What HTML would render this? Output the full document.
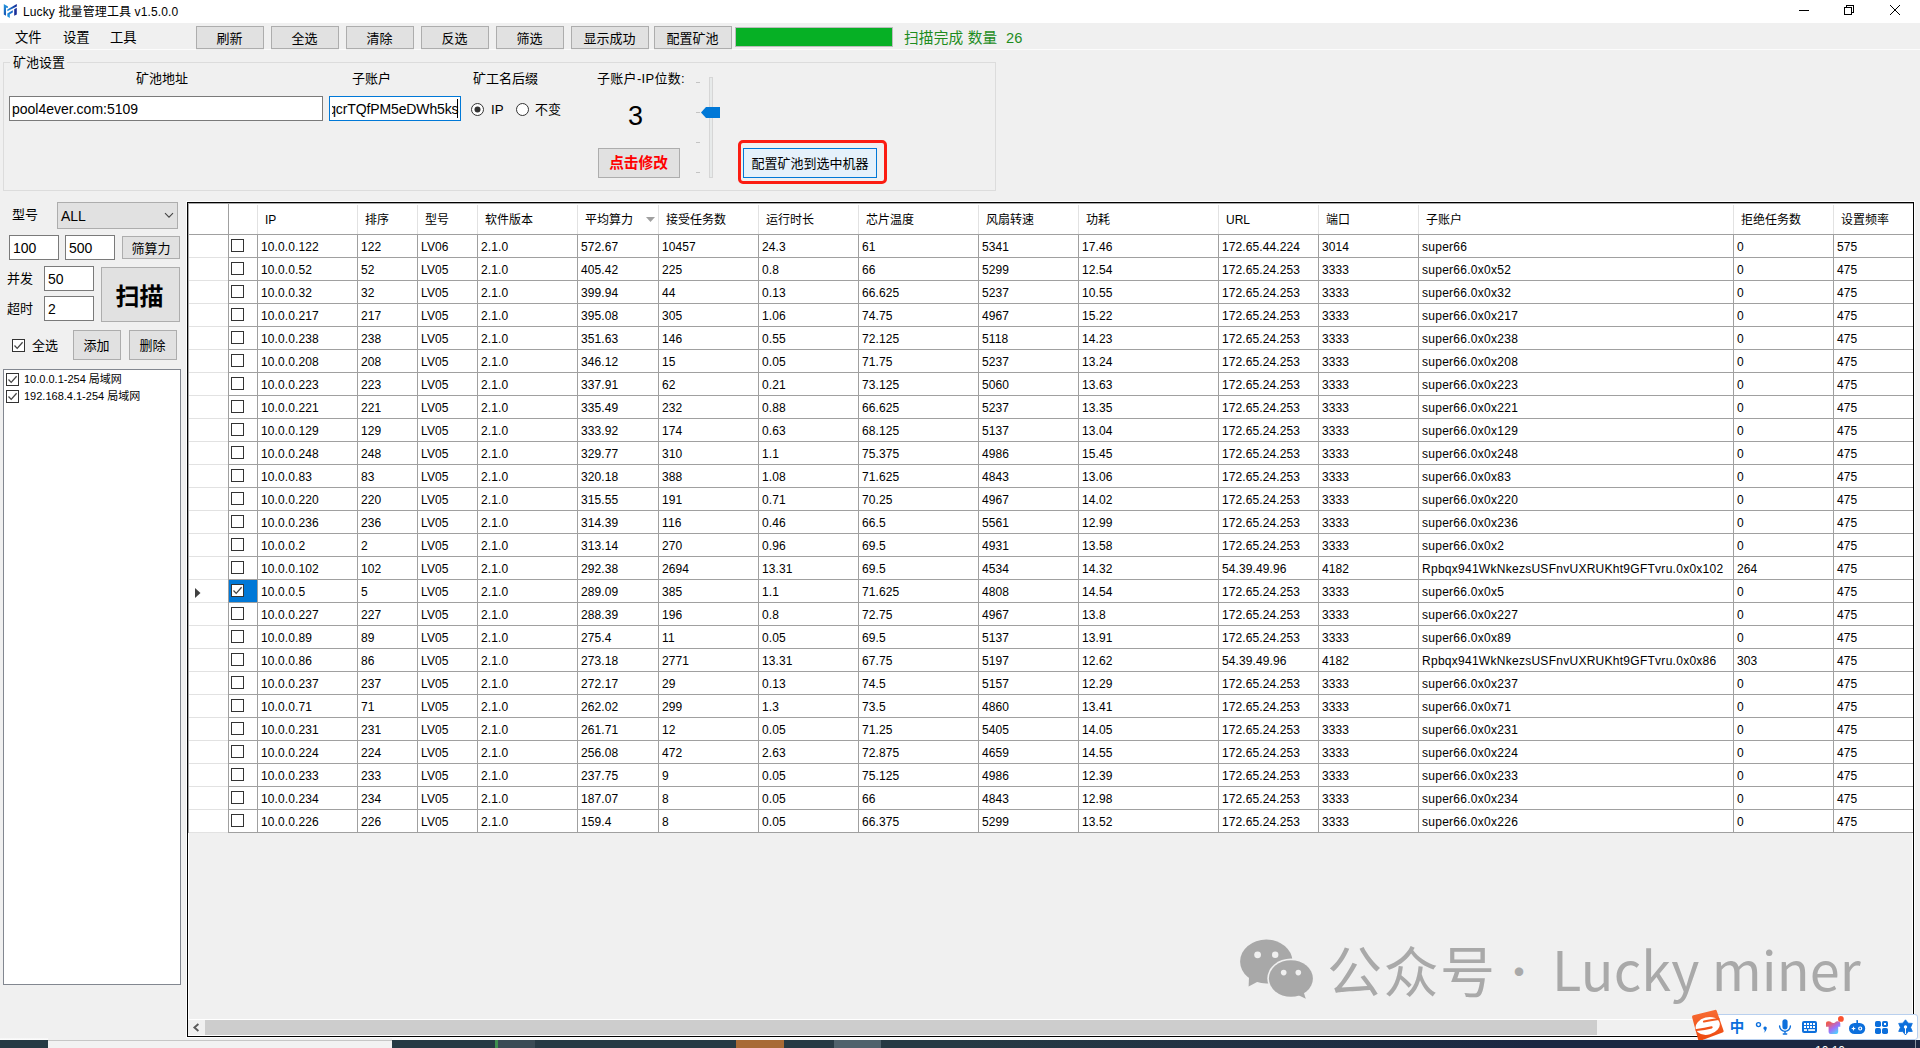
<!DOCTYPE html>
<html lang="zh-CN"><head><meta charset="utf-8"><title>Lucky 批量管理工具 v1.5.0.0</title>
<style>
html,body{margin:0;padding:0}
body{width:1920px;height:1048px;overflow:hidden;background:#f0f0f0;position:relative;
 font-family:"Liberation Sans","Noto Sans CJK SC",sans-serif;font-size:13px;color:#000;}
.a{position:absolute;white-space:nowrap;box-sizing:border-box}
.btn{position:absolute;box-sizing:border-box;background:#e1e1e1;border:1px solid #adadad;text-align:center;white-space:nowrap}
.tb{position:absolute;box-sizing:border-box;background:#fff;border:1px solid #7a7a7a;white-space:nowrap;overflow:hidden}
.lbl{position:absolute;white-space:nowrap;line-height:16px;height:16px}
.cb{position:absolute;box-sizing:border-box;width:13px;height:13px;border:1px solid #333;background:#fff}
.g{position:absolute;white-space:nowrap;font-size:12px;line-height:22px;height:22px;letter-spacing:0.1px}
.gh{position:absolute;white-space:nowrap;font-size:12px;line-height:31px;height:31px}
.vl{position:absolute;width:1px;background:#a0a0a0}
.hl{position:absolute;height:1px;background:#a0a0a0}
</style></head><body>

<div class="a" style="left:0;top:0;width:1920px;height:23px;background:#fff"></div>
<svg class="a" style="left:0;top:0" width="22" height="22" viewBox="0 0 22 22">
<defs>
<linearGradient id="i1" x1="0" y1="0" x2="0" y2="1"><stop offset="0" stop-color="#2498e0"/><stop offset="1" stop-color="#1650b0"/></linearGradient>
<linearGradient id="i2" x1="0" y1="1" x2="1" y2="0"><stop offset="0" stop-color="#2498e4"/><stop offset="1" stop-color="#101c8c"/></linearGradient>
<linearGradient id="i3" x1="0" y1="1" x2="1" y2="0"><stop offset="0" stop-color="#28a4ea"/><stop offset="1" stop-color="#1458bc"/></linearGradient>
</defs>
<path d="M3.8 4 L8 6.4 V7.7 H6 V15.8 L3.8 14.6 Z" fill="url(#i1)"/>
<path d="M7.3 9.4 L16.8 4.1 V6.4 L7.3 11.3 Z" fill="url(#i2)"/>
<path d="M7.3 13.5 L12.8 10.3 V12.6 L9.8 14.3 V17.9 L7.3 16.5 Z" fill="url(#i3)"/>
<path d="M14.2 9.2 L16.8 7.8 V14.4 L14.2 15.8 Z" fill="#1a2f9a"/>
</svg>
<div class="a" style="left:23px;top:4px;font-size:12px;line-height:17px;letter-spacing:0.12px">Lucky 批量管理工具 v1.5.0.0</div>
<svg class="a" style="left:1790px;top:0" width="130" height="23" viewBox="0 0 130 23" shape-rendering="crispEdges">
<rect x="9" y="10" width="10" height="1" fill="#000"/>
<rect x="54.5" y="7.5" width="7" height="7" fill="none" stroke="#000" stroke-width="1"/>
<path d="M56.5 7.5 V5.5 H63.5 V12.5 H61.5" fill="none" stroke="#000" stroke-width="1"/>
<path d="M100 5 L110 15 M110 5 L100 15" stroke="#000" stroke-width="1" shape-rendering="geometricPrecision"/>
</svg>
<div class="lbl" style="left:15px;top:30px;font-size:13.33px">文件</div>
<div class="lbl" style="left:63px;top:30px;font-size:13.33px">设置</div>
<div class="lbl" style="left:110px;top:30px;font-size:13.33px">工具</div>
<div class="a" style="left:0;top:49px;width:1920px;height:1px;background:#fcfcfc"></div>
<div class="btn" style="left:196px;top:26px;width:68px;height:23px;line-height:24px;box-shadow:0 1px 0 #f0f0f0;text-indent:-1px">刷新</div>
<div class="btn" style="left:271px;top:26px;width:68px;height:23px;line-height:24px;box-shadow:0 1px 0 #f0f0f0;text-indent:-1px">全选</div>
<div class="btn" style="left:346px;top:26px;width:68px;height:23px;line-height:24px;box-shadow:0 1px 0 #f0f0f0;text-indent:-1px">清除</div>
<div class="btn" style="left:421px;top:26px;width:68px;height:23px;line-height:24px;box-shadow:0 1px 0 #f0f0f0;text-indent:-1px">反选</div>
<div class="btn" style="left:496px;top:26px;width:68px;height:23px;line-height:24px;box-shadow:0 1px 0 #f0f0f0;text-indent:-1px">筛选</div>
<div class="btn" style="left:571px;top:26px;width:78px;height:23px;line-height:24px;box-shadow:0 1px 0 #f0f0f0;text-indent:-1px">显示成功</div>
<div class="btn" style="left:654px;top:26px;width:78px;height:23px;line-height:24px;box-shadow:0 1px 0 #f0f0f0;text-indent:-1px">配置矿池</div>
<div class="a" style="left:735px;top:27px;width:158px;height:20px;background:#06b025;border:1px solid #bcbcbc"></div>
<div class="lbl" style="left:904px;top:29px;font-size:14.67px;line-height:18px;height:18px;color:#1e8c1e;letter-spacing:0.2px">扫描完成 数量&nbsp; 26</div>
<div class="a" style="left:3px;top:62px;width:993px;height:129px;border:1px solid #dcdcdc"></div>
<div class="lbl" style="left:10px;top:55px;width:57px;background:#f0f0f0;padding-left:3px;box-sizing:border-box">矿池设置</div>
<div class="lbl" style="left:136px;top:71px">矿池地址</div>
<div class="lbl" style="left:352px;top:71px">子账户</div>
<div class="lbl" style="left:473px;top:71px">矿工名后缀</div>
<div class="lbl" style="left:597px;top:71px;letter-spacing:0.3px">子账户-IP位数:</div>
<div class="tb" style="left:9px;top:96px;width:314px;height:25px;line-height:25px;padding-left:2px;font-size:14px">pool4ever.com:5109</div>
<div class="tb" style="left:329px;top:96px;width:132px;height:25px;border-color:#0078d7"><div class="a" style="left:2px;right:0;top:0;bottom:0;overflow:hidden"><div class="a" style="right:1.5px;top:0;line-height:25px;font-size:14px;letter-spacing:-0.12px">qcrTQfPM5eDWh5ks</div></div><div class="a" style="left:127px;top:2px;width:1px;height:19px;background:#000"></div></div>
<svg class="a" style="left:471px;top:103px" width="13" height="13" viewBox="0 0 13 13"><circle cx="6.5" cy="6.5" r="6" fill="#fff" stroke="#333" stroke-width="1"/><circle cx="6.5" cy="6.5" r="3" fill="#333"/></svg>
<div class="lbl" style="left:491px;top:102px;font-size:13.33px">IP</div>
<svg class="a" style="left:516px;top:103px" width="13" height="13" viewBox="0 0 13 13"><circle cx="6.5" cy="6.5" r="6" fill="#fff" stroke="#333" stroke-width="1"/></svg>
<div class="lbl" style="left:535px;top:102px">不变</div>
<div class="a" style="left:628px;top:101px;font-size:27px;line-height:30px">3</div>
<div class="btn" style="left:598px;top:148px;width:82px;height:30px;line-height:29px;color:#f00;font-weight:bold;font-size:14.67px;text-indent:-1px">点击修改</div>
<div class="a" style="left:709px;top:77px;width:4px;height:101px;background:#e7eaea;border:1px solid #d6d6d6"></div>
<div class="a" style="left:696px;top:82px;width:4px;height:1px;background:#c4c4c4"></div>
<div class="a" style="left:696px;top:112px;width:4px;height:1px;background:#c4c4c4"></div>
<div class="a" style="left:696px;top:142px;width:4px;height:1px;background:#c4c4c4"></div>
<div class="a" style="left:696px;top:172px;width:4px;height:1px;background:#c4c4c4"></div>
<svg class="a" style="left:700px;top:107px" width="20" height="11" viewBox="0 0 20 11"><path d="M1 5.5 L6 0 H20 V11 H6 Z" fill="#0078d7"/></svg>
<div class="a" style="left:738px;top:140px;width:149px;height:44px;border:3px solid #fb1c12;border-radius:5px"></div>
<div class="btn" style="left:743px;top:148px;width:134px;height:30px;line-height:29px;background:#e5f1fb;border-color:#0078d7">配置矿池到选中机器</div>
<div class="lbl" style="left:12px;top:207px">型号</div>
<div class="btn" style="left:57px;top:202px;width:121px;height:27px;line-height:26px;text-align:left;padding-left:3px;font-size:14px">ALL</div>
<svg class="a" style="left:164px;top:212px" width="10" height="7" viewBox="0 0 10 7"><path d="M1 1.2 L5 5.2 L9 1.2" fill="none" stroke="#444" stroke-width="1.1"/></svg>
<div class="tb" style="left:9px;top:235px;width:50px;height:25px;line-height:24px;padding-left:3px;font-size:14px">100</div>
<div class="tb" style="left:65px;top:235px;width:50px;height:25px;line-height:24px;padding-left:3px;font-size:14px">500</div>
<div class="btn" style="left:122px;top:236px;width:58px;height:23px;line-height:23px">筛算力</div>
<div class="lbl" style="left:7px;top:271px">并发</div>
<div class="tb" style="left:44px;top:266px;width:50px;height:25px;line-height:24px;padding-left:3px;font-size:14px">50</div>
<div class="lbl" style="left:7px;top:301px">超时</div>
<div class="tb" style="left:44px;top:296px;width:50px;height:25px;line-height:24px;padding-left:3px;font-size:14px">2</div>
<div class="btn" style="left:101px;top:267px;width:79px;height:55px;line-height:57px;font-size:24px;font-weight:bold;text-indent:-2px">扫描</div>
<div class="cb" style="left:12px;top:339px"><svg width="11" height="11" viewBox="0 0 11 11" style="display:block"><path d="M1.5 5.5 L4.2 8.4 L9.6 2.2" fill="none" stroke="#444" stroke-width="1.3"/></svg></div>
<div class="lbl" style="left:32px;top:338px">全选</div>
<div class="btn" style="left:73px;top:330px;width:48px;height:30px;line-height:29px;text-indent:-1px">添加</div>
<div class="btn" style="left:129px;top:330px;width:48px;height:30px;line-height:29px;text-indent:-1px">删除</div>
<div class="a" style="left:3px;top:369px;width:178px;height:616px;background:#fff;border:1px solid #828790"></div>
<div class="cb" style="left:6px;top:373px"><svg width="11" height="11" viewBox="0 0 11 11" style="display:block"><path d="M1.5 5.5 L4.2 8.4 L9.6 2.2" fill="none" stroke="#444" stroke-width="1.3"/></svg></div>
<div class="lbl" style="left:24px;top:372px;font-size:11px;line-height:15px;height:15px">10.0.0.1-254 局域网</div>
<div class="cb" style="left:6px;top:390px"><svg width="11" height="11" viewBox="0 0 11 11" style="display:block"><path d="M1.5 5.5 L4.2 8.4 L9.6 2.2" fill="none" stroke="#444" stroke-width="1.3"/></svg></div>
<div class="lbl" style="left:24px;top:389px;font-size:11px;line-height:15px;height:15px">192.168.4.1-254 局域网</div>
<div class="a" style="left:186px;top:201px;width:1729px;height:837px;border:1px solid #fdfdfd"></div>
<div class="a" style="left:187px;top:202px;width:1727px;height:835px;border:1px solid #000;background:#f0f0f0;box-shadow:inset 1px 1px 0 #fff, inset -1px -1px 0 #fff"></div>
<div class="a" style="left:188px;top:203px;width:1725px;height:630px;background:#fff"></div>
<div class="hl" style="left:188px;top:203px;width:1725px;background:#a8a8a8"></div>
<div class="vl" style="left:188px;top:203px;height:630px;background:#a8a8a8"></div>
<div class="a" style="left:229px;top:580px;width:28px;height:22px;background:#0078d7"></div>
<div class="vl" style="left:228px;top:204px;height:30px"></div>
<div class="vl" style="left:228px;top:234px;height:599px"></div>
<div class="vl" style="left:257px;top:205px;height:29px;background:#e2e2e2"></div>
<div class="vl" style="left:257px;top:234px;height:599px"></div>
<div class="vl" style="left:357px;top:205px;height:29px;background:#e2e2e2"></div>
<div class="vl" style="left:357px;top:234px;height:599px"></div>
<div class="vl" style="left:417px;top:205px;height:29px;background:#e2e2e2"></div>
<div class="vl" style="left:417px;top:234px;height:599px"></div>
<div class="vl" style="left:477px;top:205px;height:29px;background:#e2e2e2"></div>
<div class="vl" style="left:477px;top:234px;height:599px"></div>
<div class="vl" style="left:577px;top:205px;height:29px;background:#e2e2e2"></div>
<div class="vl" style="left:577px;top:234px;height:599px"></div>
<div class="vl" style="left:658px;top:205px;height:29px;background:#e2e2e2"></div>
<div class="vl" style="left:658px;top:234px;height:599px"></div>
<div class="vl" style="left:758px;top:205px;height:29px;background:#e2e2e2"></div>
<div class="vl" style="left:758px;top:234px;height:599px"></div>
<div class="vl" style="left:858px;top:205px;height:29px;background:#e2e2e2"></div>
<div class="vl" style="left:858px;top:234px;height:599px"></div>
<div class="vl" style="left:978px;top:205px;height:29px;background:#e2e2e2"></div>
<div class="vl" style="left:978px;top:234px;height:599px"></div>
<div class="vl" style="left:1078px;top:205px;height:29px;background:#e2e2e2"></div>
<div class="vl" style="left:1078px;top:234px;height:599px"></div>
<div class="vl" style="left:1218px;top:205px;height:29px;background:#e2e2e2"></div>
<div class="vl" style="left:1218px;top:234px;height:599px"></div>
<div class="vl" style="left:1318px;top:205px;height:29px;background:#e2e2e2"></div>
<div class="vl" style="left:1318px;top:234px;height:599px"></div>
<div class="vl" style="left:1418px;top:205px;height:29px;background:#e2e2e2"></div>
<div class="vl" style="left:1418px;top:234px;height:599px"></div>
<div class="vl" style="left:1733px;top:205px;height:29px;background:#e2e2e2"></div>
<div class="vl" style="left:1733px;top:234px;height:599px"></div>
<div class="vl" style="left:1833px;top:205px;height:29px;background:#e2e2e2"></div>
<div class="vl" style="left:1833px;top:234px;height:599px"></div>
<div class="hl" style="left:189px;top:234px;width:1724px"></div>
<div class="hl" style="left:189px;top:257px;width:39px;background:#e2e2e2"></div>
<div class="hl" style="left:228px;top:257px;width:1685px"></div>
<div class="hl" style="left:189px;top:280px;width:39px;background:#e2e2e2"></div>
<div class="hl" style="left:228px;top:280px;width:1685px"></div>
<div class="hl" style="left:189px;top:303px;width:39px;background:#e2e2e2"></div>
<div class="hl" style="left:228px;top:303px;width:1685px"></div>
<div class="hl" style="left:189px;top:326px;width:39px;background:#e2e2e2"></div>
<div class="hl" style="left:228px;top:326px;width:1685px"></div>
<div class="hl" style="left:189px;top:349px;width:39px;background:#e2e2e2"></div>
<div class="hl" style="left:228px;top:349px;width:1685px"></div>
<div class="hl" style="left:189px;top:372px;width:39px;background:#e2e2e2"></div>
<div class="hl" style="left:228px;top:372px;width:1685px"></div>
<div class="hl" style="left:189px;top:395px;width:39px;background:#e2e2e2"></div>
<div class="hl" style="left:228px;top:395px;width:1685px"></div>
<div class="hl" style="left:189px;top:418px;width:39px;background:#e2e2e2"></div>
<div class="hl" style="left:228px;top:418px;width:1685px"></div>
<div class="hl" style="left:189px;top:441px;width:39px;background:#e2e2e2"></div>
<div class="hl" style="left:228px;top:441px;width:1685px"></div>
<div class="hl" style="left:189px;top:464px;width:39px;background:#e2e2e2"></div>
<div class="hl" style="left:228px;top:464px;width:1685px"></div>
<div class="hl" style="left:189px;top:487px;width:39px;background:#e2e2e2"></div>
<div class="hl" style="left:228px;top:487px;width:1685px"></div>
<div class="hl" style="left:189px;top:510px;width:39px;background:#e2e2e2"></div>
<div class="hl" style="left:228px;top:510px;width:1685px"></div>
<div class="hl" style="left:189px;top:533px;width:39px;background:#e2e2e2"></div>
<div class="hl" style="left:228px;top:533px;width:1685px"></div>
<div class="hl" style="left:189px;top:556px;width:39px;background:#e2e2e2"></div>
<div class="hl" style="left:228px;top:556px;width:1685px"></div>
<div class="hl" style="left:189px;top:579px;width:39px;background:#e2e2e2"></div>
<div class="hl" style="left:228px;top:579px;width:1685px"></div>
<div class="hl" style="left:189px;top:602px;width:39px;background:#e2e2e2"></div>
<div class="hl" style="left:228px;top:602px;width:1685px"></div>
<div class="hl" style="left:189px;top:625px;width:39px;background:#e2e2e2"></div>
<div class="hl" style="left:228px;top:625px;width:1685px"></div>
<div class="hl" style="left:189px;top:648px;width:39px;background:#e2e2e2"></div>
<div class="hl" style="left:228px;top:648px;width:1685px"></div>
<div class="hl" style="left:189px;top:671px;width:39px;background:#e2e2e2"></div>
<div class="hl" style="left:228px;top:671px;width:1685px"></div>
<div class="hl" style="left:189px;top:694px;width:39px;background:#e2e2e2"></div>
<div class="hl" style="left:228px;top:694px;width:1685px"></div>
<div class="hl" style="left:189px;top:717px;width:39px;background:#e2e2e2"></div>
<div class="hl" style="left:228px;top:717px;width:1685px"></div>
<div class="hl" style="left:189px;top:740px;width:39px;background:#e2e2e2"></div>
<div class="hl" style="left:228px;top:740px;width:1685px"></div>
<div class="hl" style="left:189px;top:763px;width:39px;background:#e2e2e2"></div>
<div class="hl" style="left:228px;top:763px;width:1685px"></div>
<div class="hl" style="left:189px;top:786px;width:39px;background:#e2e2e2"></div>
<div class="hl" style="left:228px;top:786px;width:1685px"></div>
<div class="hl" style="left:189px;top:809px;width:39px;background:#e2e2e2"></div>
<div class="hl" style="left:228px;top:809px;width:1685px"></div>
<div class="hl" style="left:189px;top:832px;width:39px;background:#e2e2e2"></div>
<div class="hl" style="left:228px;top:832px;width:1685px"></div>
<div class="gh" style="left:265px;top:205px">IP</div>
<div class="gh" style="left:365px;top:205px">排序</div>
<div class="gh" style="left:425px;top:205px">型号</div>
<div class="gh" style="left:485px;top:205px">软件版本</div>
<div class="gh" style="left:585px;top:205px">平均算力</div>
<div class="gh" style="left:666px;top:205px">接受任务数</div>
<div class="gh" style="left:766px;top:205px">运行时长</div>
<div class="gh" style="left:866px;top:205px">芯片温度</div>
<div class="gh" style="left:986px;top:205px">风扇转速</div>
<div class="gh" style="left:1086px;top:205px">功耗</div>
<div class="gh" style="left:1226px;top:205px">URL</div>
<div class="gh" style="left:1326px;top:205px">端口</div>
<div class="gh" style="left:1426px;top:205px">子账户</div>
<div class="gh" style="left:1741px;top:205px">拒绝任务数</div>
<div class="gh" style="left:1841px;top:205px">设置频率</div>
<svg class="a" style="left:646px;top:217px" width="9" height="5" viewBox="0 0 9 5"><path d="M0 0 H9 L4.5 5 Z" fill="#a0a0a0"/></svg>
<div class="cb" style="left:231px;top:239px"></div>
<div class="g" style="left:261px;top:236px">10.0.0.122</div>
<div class="g" style="left:361px;top:236px">122</div>
<div class="g" style="left:421px;top:236px">LV06</div>
<div class="g" style="left:481px;top:236px">2.1.0</div>
<div class="g" style="left:581px;top:236px">572.67</div>
<div class="g" style="left:662px;top:236px">10457</div>
<div class="g" style="left:762px;top:236px">24.3</div>
<div class="g" style="left:862px;top:236px">61</div>
<div class="g" style="left:982px;top:236px">5341</div>
<div class="g" style="left:1082px;top:236px">17.46</div>
<div class="g" style="left:1222px;top:236px">172.65.44.224</div>
<div class="g" style="left:1322px;top:236px">3014</div>
<div class="g" style="left:1422px;top:236px;letter-spacing:0.27px">super66</div>
<div class="g" style="left:1737px;top:236px">0</div>
<div class="g" style="left:1837px;top:236px">575</div>
<div class="cb" style="left:231px;top:262px"></div>
<div class="g" style="left:261px;top:259px">10.0.0.52</div>
<div class="g" style="left:361px;top:259px">52</div>
<div class="g" style="left:421px;top:259px">LV05</div>
<div class="g" style="left:481px;top:259px">2.1.0</div>
<div class="g" style="left:581px;top:259px">405.42</div>
<div class="g" style="left:662px;top:259px">225</div>
<div class="g" style="left:762px;top:259px">0.8</div>
<div class="g" style="left:862px;top:259px">66</div>
<div class="g" style="left:982px;top:259px">5299</div>
<div class="g" style="left:1082px;top:259px">12.54</div>
<div class="g" style="left:1222px;top:259px">172.65.24.253</div>
<div class="g" style="left:1322px;top:259px">3333</div>
<div class="g" style="left:1422px;top:259px;letter-spacing:0.27px">super66.0x0x52</div>
<div class="g" style="left:1737px;top:259px">0</div>
<div class="g" style="left:1837px;top:259px">475</div>
<div class="cb" style="left:231px;top:285px"></div>
<div class="g" style="left:261px;top:282px">10.0.0.32</div>
<div class="g" style="left:361px;top:282px">32</div>
<div class="g" style="left:421px;top:282px">LV05</div>
<div class="g" style="left:481px;top:282px">2.1.0</div>
<div class="g" style="left:581px;top:282px">399.94</div>
<div class="g" style="left:662px;top:282px">44</div>
<div class="g" style="left:762px;top:282px">0.13</div>
<div class="g" style="left:862px;top:282px">66.625</div>
<div class="g" style="left:982px;top:282px">5237</div>
<div class="g" style="left:1082px;top:282px">10.55</div>
<div class="g" style="left:1222px;top:282px">172.65.24.253</div>
<div class="g" style="left:1322px;top:282px">3333</div>
<div class="g" style="left:1422px;top:282px;letter-spacing:0.27px">super66.0x0x32</div>
<div class="g" style="left:1737px;top:282px">0</div>
<div class="g" style="left:1837px;top:282px">475</div>
<div class="cb" style="left:231px;top:308px"></div>
<div class="g" style="left:261px;top:305px">10.0.0.217</div>
<div class="g" style="left:361px;top:305px">217</div>
<div class="g" style="left:421px;top:305px">LV05</div>
<div class="g" style="left:481px;top:305px">2.1.0</div>
<div class="g" style="left:581px;top:305px">395.08</div>
<div class="g" style="left:662px;top:305px">305</div>
<div class="g" style="left:762px;top:305px">1.06</div>
<div class="g" style="left:862px;top:305px">74.75</div>
<div class="g" style="left:982px;top:305px">4967</div>
<div class="g" style="left:1082px;top:305px">15.22</div>
<div class="g" style="left:1222px;top:305px">172.65.24.253</div>
<div class="g" style="left:1322px;top:305px">3333</div>
<div class="g" style="left:1422px;top:305px;letter-spacing:0.27px">super66.0x0x217</div>
<div class="g" style="left:1737px;top:305px">0</div>
<div class="g" style="left:1837px;top:305px">475</div>
<div class="cb" style="left:231px;top:331px"></div>
<div class="g" style="left:261px;top:328px">10.0.0.238</div>
<div class="g" style="left:361px;top:328px">238</div>
<div class="g" style="left:421px;top:328px">LV05</div>
<div class="g" style="left:481px;top:328px">2.1.0</div>
<div class="g" style="left:581px;top:328px">351.63</div>
<div class="g" style="left:662px;top:328px">146</div>
<div class="g" style="left:762px;top:328px">0.55</div>
<div class="g" style="left:862px;top:328px">72.125</div>
<div class="g" style="left:982px;top:328px">5118</div>
<div class="g" style="left:1082px;top:328px">14.23</div>
<div class="g" style="left:1222px;top:328px">172.65.24.253</div>
<div class="g" style="left:1322px;top:328px">3333</div>
<div class="g" style="left:1422px;top:328px;letter-spacing:0.27px">super66.0x0x238</div>
<div class="g" style="left:1737px;top:328px">0</div>
<div class="g" style="left:1837px;top:328px">475</div>
<div class="cb" style="left:231px;top:354px"></div>
<div class="g" style="left:261px;top:351px">10.0.0.208</div>
<div class="g" style="left:361px;top:351px">208</div>
<div class="g" style="left:421px;top:351px">LV05</div>
<div class="g" style="left:481px;top:351px">2.1.0</div>
<div class="g" style="left:581px;top:351px">346.12</div>
<div class="g" style="left:662px;top:351px">15</div>
<div class="g" style="left:762px;top:351px">0.05</div>
<div class="g" style="left:862px;top:351px">71.75</div>
<div class="g" style="left:982px;top:351px">5237</div>
<div class="g" style="left:1082px;top:351px">13.24</div>
<div class="g" style="left:1222px;top:351px">172.65.24.253</div>
<div class="g" style="left:1322px;top:351px">3333</div>
<div class="g" style="left:1422px;top:351px;letter-spacing:0.27px">super66.0x0x208</div>
<div class="g" style="left:1737px;top:351px">0</div>
<div class="g" style="left:1837px;top:351px">475</div>
<div class="cb" style="left:231px;top:377px"></div>
<div class="g" style="left:261px;top:374px">10.0.0.223</div>
<div class="g" style="left:361px;top:374px">223</div>
<div class="g" style="left:421px;top:374px">LV05</div>
<div class="g" style="left:481px;top:374px">2.1.0</div>
<div class="g" style="left:581px;top:374px">337.91</div>
<div class="g" style="left:662px;top:374px">62</div>
<div class="g" style="left:762px;top:374px">0.21</div>
<div class="g" style="left:862px;top:374px">73.125</div>
<div class="g" style="left:982px;top:374px">5060</div>
<div class="g" style="left:1082px;top:374px">13.63</div>
<div class="g" style="left:1222px;top:374px">172.65.24.253</div>
<div class="g" style="left:1322px;top:374px">3333</div>
<div class="g" style="left:1422px;top:374px;letter-spacing:0.27px">super66.0x0x223</div>
<div class="g" style="left:1737px;top:374px">0</div>
<div class="g" style="left:1837px;top:374px">475</div>
<div class="cb" style="left:231px;top:400px"></div>
<div class="g" style="left:261px;top:397px">10.0.0.221</div>
<div class="g" style="left:361px;top:397px">221</div>
<div class="g" style="left:421px;top:397px">LV05</div>
<div class="g" style="left:481px;top:397px">2.1.0</div>
<div class="g" style="left:581px;top:397px">335.49</div>
<div class="g" style="left:662px;top:397px">232</div>
<div class="g" style="left:762px;top:397px">0.88</div>
<div class="g" style="left:862px;top:397px">66.625</div>
<div class="g" style="left:982px;top:397px">5237</div>
<div class="g" style="left:1082px;top:397px">13.35</div>
<div class="g" style="left:1222px;top:397px">172.65.24.253</div>
<div class="g" style="left:1322px;top:397px">3333</div>
<div class="g" style="left:1422px;top:397px;letter-spacing:0.27px">super66.0x0x221</div>
<div class="g" style="left:1737px;top:397px">0</div>
<div class="g" style="left:1837px;top:397px">475</div>
<div class="cb" style="left:231px;top:423px"></div>
<div class="g" style="left:261px;top:420px">10.0.0.129</div>
<div class="g" style="left:361px;top:420px">129</div>
<div class="g" style="left:421px;top:420px">LV05</div>
<div class="g" style="left:481px;top:420px">2.1.0</div>
<div class="g" style="left:581px;top:420px">333.92</div>
<div class="g" style="left:662px;top:420px">174</div>
<div class="g" style="left:762px;top:420px">0.63</div>
<div class="g" style="left:862px;top:420px">68.125</div>
<div class="g" style="left:982px;top:420px">5137</div>
<div class="g" style="left:1082px;top:420px">13.04</div>
<div class="g" style="left:1222px;top:420px">172.65.24.253</div>
<div class="g" style="left:1322px;top:420px">3333</div>
<div class="g" style="left:1422px;top:420px;letter-spacing:0.27px">super66.0x0x129</div>
<div class="g" style="left:1737px;top:420px">0</div>
<div class="g" style="left:1837px;top:420px">475</div>
<div class="cb" style="left:231px;top:446px"></div>
<div class="g" style="left:261px;top:443px">10.0.0.248</div>
<div class="g" style="left:361px;top:443px">248</div>
<div class="g" style="left:421px;top:443px">LV05</div>
<div class="g" style="left:481px;top:443px">2.1.0</div>
<div class="g" style="left:581px;top:443px">329.77</div>
<div class="g" style="left:662px;top:443px">310</div>
<div class="g" style="left:762px;top:443px">1.1</div>
<div class="g" style="left:862px;top:443px">75.375</div>
<div class="g" style="left:982px;top:443px">4986</div>
<div class="g" style="left:1082px;top:443px">15.45</div>
<div class="g" style="left:1222px;top:443px">172.65.24.253</div>
<div class="g" style="left:1322px;top:443px">3333</div>
<div class="g" style="left:1422px;top:443px;letter-spacing:0.27px">super66.0x0x248</div>
<div class="g" style="left:1737px;top:443px">0</div>
<div class="g" style="left:1837px;top:443px">475</div>
<div class="cb" style="left:231px;top:469px"></div>
<div class="g" style="left:261px;top:466px">10.0.0.83</div>
<div class="g" style="left:361px;top:466px">83</div>
<div class="g" style="left:421px;top:466px">LV05</div>
<div class="g" style="left:481px;top:466px">2.1.0</div>
<div class="g" style="left:581px;top:466px">320.18</div>
<div class="g" style="left:662px;top:466px">388</div>
<div class="g" style="left:762px;top:466px">1.08</div>
<div class="g" style="left:862px;top:466px">71.625</div>
<div class="g" style="left:982px;top:466px">4843</div>
<div class="g" style="left:1082px;top:466px">13.06</div>
<div class="g" style="left:1222px;top:466px">172.65.24.253</div>
<div class="g" style="left:1322px;top:466px">3333</div>
<div class="g" style="left:1422px;top:466px;letter-spacing:0.27px">super66.0x0x83</div>
<div class="g" style="left:1737px;top:466px">0</div>
<div class="g" style="left:1837px;top:466px">475</div>
<div class="cb" style="left:231px;top:492px"></div>
<div class="g" style="left:261px;top:489px">10.0.0.220</div>
<div class="g" style="left:361px;top:489px">220</div>
<div class="g" style="left:421px;top:489px">LV05</div>
<div class="g" style="left:481px;top:489px">2.1.0</div>
<div class="g" style="left:581px;top:489px">315.55</div>
<div class="g" style="left:662px;top:489px">191</div>
<div class="g" style="left:762px;top:489px">0.71</div>
<div class="g" style="left:862px;top:489px">70.25</div>
<div class="g" style="left:982px;top:489px">4967</div>
<div class="g" style="left:1082px;top:489px">14.02</div>
<div class="g" style="left:1222px;top:489px">172.65.24.253</div>
<div class="g" style="left:1322px;top:489px">3333</div>
<div class="g" style="left:1422px;top:489px;letter-spacing:0.27px">super66.0x0x220</div>
<div class="g" style="left:1737px;top:489px">0</div>
<div class="g" style="left:1837px;top:489px">475</div>
<div class="cb" style="left:231px;top:515px"></div>
<div class="g" style="left:261px;top:512px">10.0.0.236</div>
<div class="g" style="left:361px;top:512px">236</div>
<div class="g" style="left:421px;top:512px">LV05</div>
<div class="g" style="left:481px;top:512px">2.1.0</div>
<div class="g" style="left:581px;top:512px">314.39</div>
<div class="g" style="left:662px;top:512px">116</div>
<div class="g" style="left:762px;top:512px">0.46</div>
<div class="g" style="left:862px;top:512px">66.5</div>
<div class="g" style="left:982px;top:512px">5561</div>
<div class="g" style="left:1082px;top:512px">12.99</div>
<div class="g" style="left:1222px;top:512px">172.65.24.253</div>
<div class="g" style="left:1322px;top:512px">3333</div>
<div class="g" style="left:1422px;top:512px;letter-spacing:0.27px">super66.0x0x236</div>
<div class="g" style="left:1737px;top:512px">0</div>
<div class="g" style="left:1837px;top:512px">475</div>
<div class="cb" style="left:231px;top:538px"></div>
<div class="g" style="left:261px;top:535px">10.0.0.2</div>
<div class="g" style="left:361px;top:535px">2</div>
<div class="g" style="left:421px;top:535px">LV05</div>
<div class="g" style="left:481px;top:535px">2.1.0</div>
<div class="g" style="left:581px;top:535px">313.14</div>
<div class="g" style="left:662px;top:535px">270</div>
<div class="g" style="left:762px;top:535px">0.96</div>
<div class="g" style="left:862px;top:535px">69.5</div>
<div class="g" style="left:982px;top:535px">4931</div>
<div class="g" style="left:1082px;top:535px">13.58</div>
<div class="g" style="left:1222px;top:535px">172.65.24.253</div>
<div class="g" style="left:1322px;top:535px">3333</div>
<div class="g" style="left:1422px;top:535px;letter-spacing:0.27px">super66.0x0x2</div>
<div class="g" style="left:1737px;top:535px">0</div>
<div class="g" style="left:1837px;top:535px">475</div>
<div class="cb" style="left:231px;top:561px"></div>
<div class="g" style="left:261px;top:558px">10.0.0.102</div>
<div class="g" style="left:361px;top:558px">102</div>
<div class="g" style="left:421px;top:558px">LV05</div>
<div class="g" style="left:481px;top:558px">2.1.0</div>
<div class="g" style="left:581px;top:558px">292.38</div>
<div class="g" style="left:662px;top:558px">2694</div>
<div class="g" style="left:762px;top:558px">13.31</div>
<div class="g" style="left:862px;top:558px">69.5</div>
<div class="g" style="left:982px;top:558px">4534</div>
<div class="g" style="left:1082px;top:558px">14.32</div>
<div class="g" style="left:1222px;top:558px">54.39.49.96</div>
<div class="g" style="left:1322px;top:558px">4182</div>
<div class="g" style="left:1422px;top:558px;letter-spacing:0.27px">Rpbqx941WkNkezsUSFnvUXRUKht9GFTvru.0x0x102</div>
<div class="g" style="left:1737px;top:558px">264</div>
<div class="g" style="left:1837px;top:558px">475</div>
<div class="cb" style="left:231px;top:584px"><svg width="11" height="11" viewBox="0 0 11 11" style="display:block"><path d="M1.5 5.5 L4.2 8.4 L9.6 2.2" fill="none" stroke="#444" stroke-width="1.3"/></svg></div>
<svg class="a" style="left:195px;top:588px" width="6" height="10" viewBox="0 0 6 10"><path d="M0 0 L5.5 5 L0 10 Z" fill="#404040"/></svg>
<div class="g" style="left:261px;top:581px">10.0.0.5</div>
<div class="g" style="left:361px;top:581px">5</div>
<div class="g" style="left:421px;top:581px">LV05</div>
<div class="g" style="left:481px;top:581px">2.1.0</div>
<div class="g" style="left:581px;top:581px">289.09</div>
<div class="g" style="left:662px;top:581px">385</div>
<div class="g" style="left:762px;top:581px">1.1</div>
<div class="g" style="left:862px;top:581px">71.625</div>
<div class="g" style="left:982px;top:581px">4808</div>
<div class="g" style="left:1082px;top:581px">14.54</div>
<div class="g" style="left:1222px;top:581px">172.65.24.253</div>
<div class="g" style="left:1322px;top:581px">3333</div>
<div class="g" style="left:1422px;top:581px;letter-spacing:0.27px">super66.0x0x5</div>
<div class="g" style="left:1737px;top:581px">0</div>
<div class="g" style="left:1837px;top:581px">475</div>
<div class="cb" style="left:231px;top:607px"></div>
<div class="g" style="left:261px;top:604px">10.0.0.227</div>
<div class="g" style="left:361px;top:604px">227</div>
<div class="g" style="left:421px;top:604px">LV05</div>
<div class="g" style="left:481px;top:604px">2.1.0</div>
<div class="g" style="left:581px;top:604px">288.39</div>
<div class="g" style="left:662px;top:604px">196</div>
<div class="g" style="left:762px;top:604px">0.8</div>
<div class="g" style="left:862px;top:604px">72.75</div>
<div class="g" style="left:982px;top:604px">4967</div>
<div class="g" style="left:1082px;top:604px">13.8</div>
<div class="g" style="left:1222px;top:604px">172.65.24.253</div>
<div class="g" style="left:1322px;top:604px">3333</div>
<div class="g" style="left:1422px;top:604px;letter-spacing:0.27px">super66.0x0x227</div>
<div class="g" style="left:1737px;top:604px">0</div>
<div class="g" style="left:1837px;top:604px">475</div>
<div class="cb" style="left:231px;top:630px"></div>
<div class="g" style="left:261px;top:627px">10.0.0.89</div>
<div class="g" style="left:361px;top:627px">89</div>
<div class="g" style="left:421px;top:627px">LV05</div>
<div class="g" style="left:481px;top:627px">2.1.0</div>
<div class="g" style="left:581px;top:627px">275.4</div>
<div class="g" style="left:662px;top:627px">11</div>
<div class="g" style="left:762px;top:627px">0.05</div>
<div class="g" style="left:862px;top:627px">69.5</div>
<div class="g" style="left:982px;top:627px">5137</div>
<div class="g" style="left:1082px;top:627px">13.91</div>
<div class="g" style="left:1222px;top:627px">172.65.24.253</div>
<div class="g" style="left:1322px;top:627px">3333</div>
<div class="g" style="left:1422px;top:627px;letter-spacing:0.27px">super66.0x0x89</div>
<div class="g" style="left:1737px;top:627px">0</div>
<div class="g" style="left:1837px;top:627px">475</div>
<div class="cb" style="left:231px;top:653px"></div>
<div class="g" style="left:261px;top:650px">10.0.0.86</div>
<div class="g" style="left:361px;top:650px">86</div>
<div class="g" style="left:421px;top:650px">LV05</div>
<div class="g" style="left:481px;top:650px">2.1.0</div>
<div class="g" style="left:581px;top:650px">273.18</div>
<div class="g" style="left:662px;top:650px">2771</div>
<div class="g" style="left:762px;top:650px">13.31</div>
<div class="g" style="left:862px;top:650px">67.75</div>
<div class="g" style="left:982px;top:650px">5197</div>
<div class="g" style="left:1082px;top:650px">12.62</div>
<div class="g" style="left:1222px;top:650px">54.39.49.96</div>
<div class="g" style="left:1322px;top:650px">4182</div>
<div class="g" style="left:1422px;top:650px;letter-spacing:0.27px">Rpbqx941WkNkezsUSFnvUXRUKht9GFTvru.0x0x86</div>
<div class="g" style="left:1737px;top:650px">303</div>
<div class="g" style="left:1837px;top:650px">475</div>
<div class="cb" style="left:231px;top:676px"></div>
<div class="g" style="left:261px;top:673px">10.0.0.237</div>
<div class="g" style="left:361px;top:673px">237</div>
<div class="g" style="left:421px;top:673px">LV05</div>
<div class="g" style="left:481px;top:673px">2.1.0</div>
<div class="g" style="left:581px;top:673px">272.17</div>
<div class="g" style="left:662px;top:673px">29</div>
<div class="g" style="left:762px;top:673px">0.13</div>
<div class="g" style="left:862px;top:673px">74.5</div>
<div class="g" style="left:982px;top:673px">5157</div>
<div class="g" style="left:1082px;top:673px">12.29</div>
<div class="g" style="left:1222px;top:673px">172.65.24.253</div>
<div class="g" style="left:1322px;top:673px">3333</div>
<div class="g" style="left:1422px;top:673px;letter-spacing:0.27px">super66.0x0x237</div>
<div class="g" style="left:1737px;top:673px">0</div>
<div class="g" style="left:1837px;top:673px">475</div>
<div class="cb" style="left:231px;top:699px"></div>
<div class="g" style="left:261px;top:696px">10.0.0.71</div>
<div class="g" style="left:361px;top:696px">71</div>
<div class="g" style="left:421px;top:696px">LV05</div>
<div class="g" style="left:481px;top:696px">2.1.0</div>
<div class="g" style="left:581px;top:696px">262.02</div>
<div class="g" style="left:662px;top:696px">299</div>
<div class="g" style="left:762px;top:696px">1.3</div>
<div class="g" style="left:862px;top:696px">73.5</div>
<div class="g" style="left:982px;top:696px">4860</div>
<div class="g" style="left:1082px;top:696px">13.41</div>
<div class="g" style="left:1222px;top:696px">172.65.24.253</div>
<div class="g" style="left:1322px;top:696px">3333</div>
<div class="g" style="left:1422px;top:696px;letter-spacing:0.27px">super66.0x0x71</div>
<div class="g" style="left:1737px;top:696px">0</div>
<div class="g" style="left:1837px;top:696px">475</div>
<div class="cb" style="left:231px;top:722px"></div>
<div class="g" style="left:261px;top:719px">10.0.0.231</div>
<div class="g" style="left:361px;top:719px">231</div>
<div class="g" style="left:421px;top:719px">LV05</div>
<div class="g" style="left:481px;top:719px">2.1.0</div>
<div class="g" style="left:581px;top:719px">261.71</div>
<div class="g" style="left:662px;top:719px">12</div>
<div class="g" style="left:762px;top:719px">0.05</div>
<div class="g" style="left:862px;top:719px">71.25</div>
<div class="g" style="left:982px;top:719px">5405</div>
<div class="g" style="left:1082px;top:719px">14.05</div>
<div class="g" style="left:1222px;top:719px">172.65.24.253</div>
<div class="g" style="left:1322px;top:719px">3333</div>
<div class="g" style="left:1422px;top:719px;letter-spacing:0.27px">super66.0x0x231</div>
<div class="g" style="left:1737px;top:719px">0</div>
<div class="g" style="left:1837px;top:719px">475</div>
<div class="cb" style="left:231px;top:745px"></div>
<div class="g" style="left:261px;top:742px">10.0.0.224</div>
<div class="g" style="left:361px;top:742px">224</div>
<div class="g" style="left:421px;top:742px">LV05</div>
<div class="g" style="left:481px;top:742px">2.1.0</div>
<div class="g" style="left:581px;top:742px">256.08</div>
<div class="g" style="left:662px;top:742px">472</div>
<div class="g" style="left:762px;top:742px">2.63</div>
<div class="g" style="left:862px;top:742px">72.875</div>
<div class="g" style="left:982px;top:742px">4659</div>
<div class="g" style="left:1082px;top:742px">14.55</div>
<div class="g" style="left:1222px;top:742px">172.65.24.253</div>
<div class="g" style="left:1322px;top:742px">3333</div>
<div class="g" style="left:1422px;top:742px;letter-spacing:0.27px">super66.0x0x224</div>
<div class="g" style="left:1737px;top:742px">0</div>
<div class="g" style="left:1837px;top:742px">475</div>
<div class="cb" style="left:231px;top:768px"></div>
<div class="g" style="left:261px;top:765px">10.0.0.233</div>
<div class="g" style="left:361px;top:765px">233</div>
<div class="g" style="left:421px;top:765px">LV05</div>
<div class="g" style="left:481px;top:765px">2.1.0</div>
<div class="g" style="left:581px;top:765px">237.75</div>
<div class="g" style="left:662px;top:765px">9</div>
<div class="g" style="left:762px;top:765px">0.05</div>
<div class="g" style="left:862px;top:765px">75.125</div>
<div class="g" style="left:982px;top:765px">4986</div>
<div class="g" style="left:1082px;top:765px">12.39</div>
<div class="g" style="left:1222px;top:765px">172.65.24.253</div>
<div class="g" style="left:1322px;top:765px">3333</div>
<div class="g" style="left:1422px;top:765px;letter-spacing:0.27px">super66.0x0x233</div>
<div class="g" style="left:1737px;top:765px">0</div>
<div class="g" style="left:1837px;top:765px">475</div>
<div class="cb" style="left:231px;top:791px"></div>
<div class="g" style="left:261px;top:788px">10.0.0.234</div>
<div class="g" style="left:361px;top:788px">234</div>
<div class="g" style="left:421px;top:788px">LV05</div>
<div class="g" style="left:481px;top:788px">2.1.0</div>
<div class="g" style="left:581px;top:788px">187.07</div>
<div class="g" style="left:662px;top:788px">8</div>
<div class="g" style="left:762px;top:788px">0.05</div>
<div class="g" style="left:862px;top:788px">66</div>
<div class="g" style="left:982px;top:788px">4843</div>
<div class="g" style="left:1082px;top:788px">12.98</div>
<div class="g" style="left:1222px;top:788px">172.65.24.253</div>
<div class="g" style="left:1322px;top:788px">3333</div>
<div class="g" style="left:1422px;top:788px;letter-spacing:0.27px">super66.0x0x234</div>
<div class="g" style="left:1737px;top:788px">0</div>
<div class="g" style="left:1837px;top:788px">475</div>
<div class="cb" style="left:231px;top:814px"></div>
<div class="g" style="left:261px;top:811px">10.0.0.226</div>
<div class="g" style="left:361px;top:811px">226</div>
<div class="g" style="left:421px;top:811px">LV05</div>
<div class="g" style="left:481px;top:811px">2.1.0</div>
<div class="g" style="left:581px;top:811px">159.4</div>
<div class="g" style="left:662px;top:811px">8</div>
<div class="g" style="left:762px;top:811px">0.05</div>
<div class="g" style="left:862px;top:811px">66.375</div>
<div class="g" style="left:982px;top:811px">5299</div>
<div class="g" style="left:1082px;top:811px">13.52</div>
<div class="g" style="left:1222px;top:811px">172.65.24.253</div>
<div class="g" style="left:1322px;top:811px">3333</div>
<div class="g" style="left:1422px;top:811px;letter-spacing:0.27px">super66.0x0x226</div>
<div class="g" style="left:1737px;top:811px">0</div>
<div class="g" style="left:1837px;top:811px">475</div>
<div class="a" style="left:188px;top:1019px;width:1725px;height:17px;background:#f0f0f0;border-top:1px solid #fff;border-bottom:1px solid #fff"></div>
<div class="a" style="left:205px;top:1020px;width:1392px;height:15px;background:#cdcdcd"></div>
<svg class="a" style="left:192px;top:1023px" width="8" height="9" viewBox="0 0 8 9"><path d="M6.4 1 L2.4 4.5 L6.4 8" fill="none" stroke="#5a5a5a" stroke-width="1.9"/></svg>
<svg class="a" style="left:1238px;top:938px" width="78" height="64" viewBox="0 0 78 64">
<g fill="#a8a8a8">
<ellipse cx="28.3" cy="23.5" rx="26.2" ry="22"/>
<path d="M11 39 L10.6 48.6 L20 43.6 Z"/>
</g>
<ellipse cx="52.9" cy="40.5" rx="23.6" ry="19.9" fill="#f0f0f0"/>
<g fill="#a8a8a8">
<ellipse cx="52.9" cy="40.5" rx="22" ry="18.3"/>
<path d="M60 57 L67.8 60.8 L65.6 54 Z"/>
</g>
<g fill="#f0f0f0"><circle cx="19.6" cy="16.8" r="3.4"/><circle cx="37.2" cy="16.8" r="3.2"/><circle cx="45.7" cy="34.6" r="2.8"/><circle cx="60.3" cy="34.6" r="2.8"/></g>
</svg>
<div class="a" style="left:1327px;top:929px;font-size:55px;letter-spacing:1.5px;font-family:'Noto Sans CJK SC',sans-serif;color:#a9a9a9;line-height:78px">公众号</div>
<div class="a" style="left:1499px;top:930.5px;width:40px;text-align:center;font-size:40px;font-family:'Noto Sans CJK SC',sans-serif;color:#a9a9a9;line-height:78px">·</div>
<div class="a" style="left:1552px;top:929px;font-size:54px;letter-spacing:0.1px;font-family:'Noto Sans CJK SC',sans-serif;color:#a9a9a9;line-height:78px">Lucky miner</div>
<div class="a" style="left:0;top:1040px;width:1920px;height:8px;background:linear-gradient(90deg,#263a44 0,#263a44 50%,#1b2742 80%,#1b2742 100%)"></div>
<div class="a" style="left:392px;top:1038px;width:1528px;height:2px;background:linear-gradient(#f6f6f6,#fdfdfd)"></div>
<div class="a" style="left:0;top:1038px;width:48px;height:2px;background:linear-gradient(#f6f6f6,#fdfdfd)"></div>
<div class="a" style="left:48px;top:1040px;width:344px;height:8px;background:#f2f2f2;border-top:1px solid #c6c6c6"></div>
<div class="a" style="left:495px;top:1040px;width:3px;height:8px;background:#3f8f4f"></div>
<div class="a" style="left:498px;top:1040px;width:37px;height:8px;background:#3a4b55"></div>
<div class="a" style="left:736px;top:1040px;width:48px;height:8px;background:#a86a35"></div>
<div class="a" style="left:834px;top:1040px;width:47px;height:8px;background:#4f626c"></div>
<div class="a" style="left:1915px;top:1040px;width:1px;height:8px;background:#8a93a0"></div>
<div class="a" style="left:1815px;top:1045px;font-size:12px;line-height:12px;color:#fff">10:10</div>
<div class="a" style="left:1702px;top:1014px;width:216px;height:26px;background:#fff;border:1px solid #b9d0ee;border-radius:3px"></div>
<div class="a" style="left:1729.7px;top:1017.4px;font-size:14.5px;line-height:18px;font-weight:bold;color:#0c6fdc;font-family:'Noto Sans CJK SC',sans-serif">中</div>
<svg class="a" style="left:1686px;top:1004px" width="234" height="36" viewBox="1686 1004 234 36">
<defs>
<linearGradient id="sh" x1="0" y1="0" x2="0.75" y2="1"><stop offset="0" stop-color="#f4582c"/><stop offset="0.3" stop-color="#e0607c"/><stop offset="0.6" stop-color="#a070f8"/><stop offset="1" stop-color="#48dcff"/></linearGradient>
<linearGradient id="lg" x1="0" y1="0" x2="0" y2="1"><stop offset="0" stop-color="#f76a32"/><stop offset="1" stop-color="#ee4a10"/></linearGradient>
</defs>
<path d="M1693.8 1017 L1715.2 1011.6 L1721.9 1031 L1699.8 1039.2 Z" fill="url(#lg)" stroke="url(#lg)" stroke-width="3.4" stroke-linejoin="round"/>
<ellipse cx="1707.7" cy="1025.9" rx="12.3" ry="8.7" fill="#fff" transform="rotate(-15 1707.7 1025.9)"/>
<path d="M1704 1021.5 Q1710 1020.2 1718.6 1019" fill="none" stroke="#f25a20" stroke-width="2.2" stroke-linecap="round"/>
<path d="M1696.6 1030 Q1705 1029.3 1711.6 1027.4" fill="none" stroke="#f0521a" stroke-width="2.2" stroke-linecap="round"/>
<g fill="#0c6fdc">
<circle cx="1758.5" cy="1024.6" r="2" fill="none" stroke="#0c6fdc" stroke-width="1.4"/>
<path d="M1763.4 1028.3 a1.7 1.7 0 1 1 3.3 0.5 q-0.4 2.6 -3 4.2 q1.3 -1.6 1 -3 a1.7 1.7 0 0 1 -1.3 -1.7z"/>
<rect x="1782.4" y="1019.2" width="5.2" height="10.2" rx="2.6"/>
<path d="M1779.6 1026 a5.4 5.4 0 0 0 10.8 0" fill="none" stroke="#0c6fdc" stroke-width="1.4" stroke-linecap="round"/>
<rect x="1784.3" y="1031.2" width="1.4" height="2.4"/><rect x="1782.6" y="1033.3" width="4.8" height="1.4" rx="0.7"/>
<rect x="1802" y="1021" width="15" height="12" rx="2"/>
<g fill="#fff">
<rect x="1804" y="1023" width="2" height="2"/><rect x="1807" y="1023" width="2" height="2"/><rect x="1810" y="1023" width="2" height="2"/><rect x="1813" y="1023" width="2" height="2"/>
<rect x="1804" y="1026" width="2" height="2"/><rect x="1807" y="1026" width="2" height="2"/><rect x="1810" y="1026" width="2" height="2"/><rect x="1813" y="1026" width="2" height="2"/>
<rect x="1804" y="1029.2" width="3" height="1.7"/><rect x="1808.2" y="1029.2" width="6.8" height="1.7"/>
</g>
<path d="M1826 1023 Q1826 1021.3 1828.3 1021.2 Q1830.6 1021.2 1831.6 1022.6 Q1833.4 1023.4 1835 1022.4 Q1836.2 1021 1838.2 1021.3 Q1840.3 1021.8 1840.3 1023.5 V1026.8 H1838.2 V1032 Q1838.2 1034 1836.2 1034 H1830.6 Q1828.6 1034 1828.6 1032 V1026.8 H1826 Z" fill="url(#sh)"/>
<circle cx="1840.9" cy="1018.9" r="2.9" fill="#fa5230"/>
<rect x="1849" y="1023" width="16.2" height="11" rx="5.5"/>
<rect x="1856.4" y="1020" width="1.6" height="3.6" rx="0.6"/>
<rect x="1851.7" y="1028" width="3.6" height="1.1" fill="#fff"/><rect x="1852.95" y="1026.75" width="1.1" height="3.6" fill="#fff"/>
<circle cx="1860.2" cy="1028.5" r="1.5" fill="none" stroke="#fff" stroke-width="1.2"/>
<rect x="1875" y="1021" width="6" height="6" rx="1.7"/><rect x="1882" y="1021" width="6" height="6" rx="1.7"/>
<rect x="1875" y="1028" width="6" height="6" rx="1.7"/><rect x="1882" y="1028" width="6" height="6" rx="1.7"/>
<rect x="1884" y="1023" width="2" height="2" fill="#fff"/>
<path d="M1905.5 1019.8 L1908.3 1023.2 L1912.3 1023.4 L1910.6 1027.4 L1912.3 1031.4 L1908.3 1031.6 L1905.5 1035 L1902.7 1031.6 L1898.7 1031.4 L1900.4 1027.4 L1898.7 1023.4 L1902.7 1023.2 Z" stroke="#0c6fdc" stroke-width="0.8" stroke-linejoin="round"/>
<circle cx="1905.5" cy="1026.9" r="1.7" fill="#fff"/><rect x="1905" y="1027.5" width="1" height="6.5" fill="#fff"/>
</g>
</svg>
</body></html>
